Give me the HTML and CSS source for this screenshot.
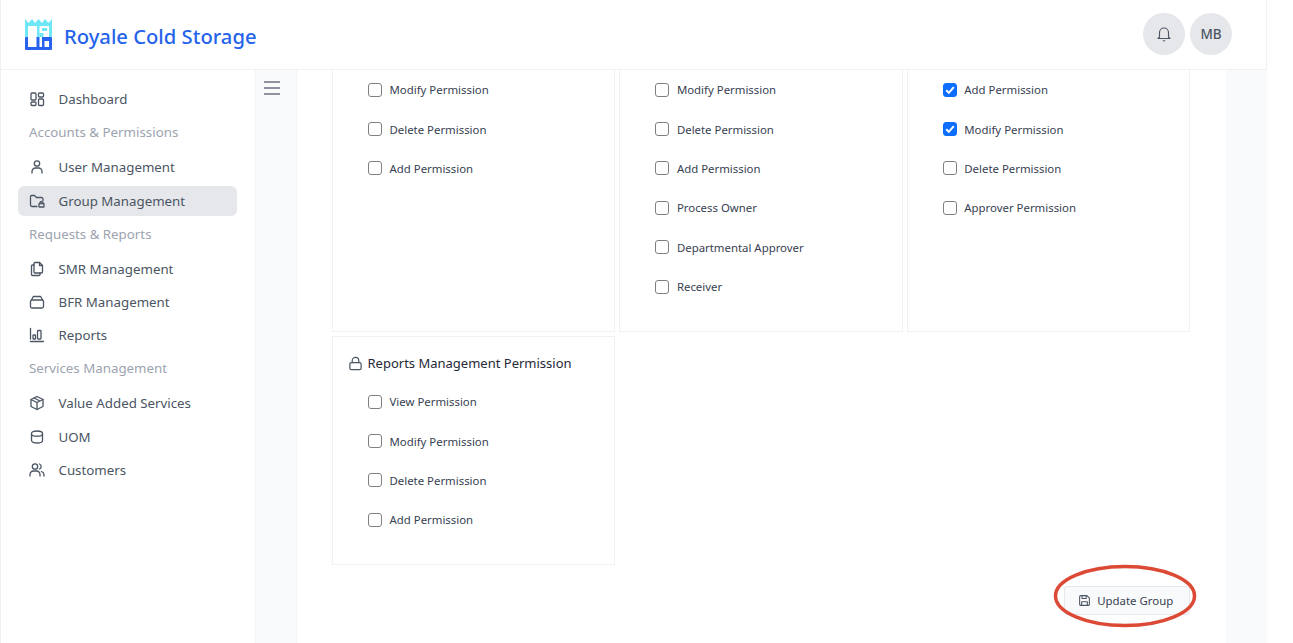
FILE: index.html
```html
<!DOCTYPE html>
<html lang="en">
<head>
<meta charset="utf-8">
<title>Royale Cold Storage</title>
<link rel="stylesheet" href="styles.css">
</head>
<body>
<div class="app">
  <header class="topbar">
    <div class="brand">
      <svg class="logo" viewBox="0 0 27 31" width="27" height="31">
        <path fill="#6ee7f7" d="M0 0L3.500 4 7 0l3 4 3.500-4 3.500 4 3-4 3.500 4L27 0V18H0z"/>
        <path fill="#fff" d="M3 7h9v11H3zM14.500 7h9.500v11H14.500z"/>
        <path fill="#6ee7f7" d="M17 9h5v3h-5zM14.500 14h4v4h-4z"/>
        <rect fill="#2a62f0" y="18" width="27" height="13" rx="1"/>
        <path fill="#fff" d="M3 18h8.500v10H3zM14.500 18h2.500v10h-2.500zM19.500 22H24v6h-4.500z"/>
      </svg>
      <span class="brand-name">Royale Cold Storage</span>
    </div>
    <div class="top-actions">
      <button class="round-btn" type="button" aria-label="Notifications">
        <svg class="icon" viewBox="0 0 24 24" width="18" height="18"><path d="M6 16V10a6 6 0 0 1 12 0v6l2 2H4z"/><path d="M11 21h2"/></svg>
      </button>
      <button class="round-btn round-text" type="button">MB</button>
    </div>
  </header>
  <div class="body">
    <nav class="sidebar">
      <a class="nav-item"><svg class="icon" viewBox="0 0 16 16"><rect x="2" y="2" width="5" height="7" rx="1"/><rect x="9.500" y="2" width="5" height="4" rx="1"/><rect x="2" y="11" width="5" height="3.500" rx="1"/><rect x="9.500" y="8" width="5" height="6.500" rx="1"/></svg>Dashboard</a>
      <div class="nav-head">Accounts &amp; Permissions</div>
      <a class="nav-item"><svg class="icon" viewBox="0 0 16 16"><circle cx="8" cy="4.500" r="2.700"/><path d="M3 14v-1.500A3.500 3.500 0 0 1 6.500 9h3a3.500 3.500 0 0 1 3.500 3.500V14"/></svg>User Management</a>
      <a class="nav-item nav-active"><svg class="icon" viewBox="0 0 16 16"><path d="M8 13.500H3a1.500 1.500 0 0 1-1.500-1.500V3.500a1 1 0 0 1 1-1h3l2 2h5A1.500 1.500 0 0 1 14 6v1.500"/><rect x="10" y="10.500" width="5" height="3.500" rx=".6"/><path d="M11 10.500V10a1.500 1.500 0 0 1 3 0v.5"/></svg>Group Management</a>
      <div class="nav-head">Requests &amp; Reports</div>
      <a class="nav-item"><svg class="icon" viewBox="0 0 16 16"><path d="M6 1.500h4.500l3 3V11a1 1 0 0 1-1 1H6a1 1 0 0 1-1-1V2.500a1 1 0 0 1 1-1z"/><path d="M10.500 1.500v3h3"/><path d="M5 4H3.500a1 1 0 0 0-1 1v8.500a1 1 0 0 0 1 1H10a1 1 0 0 0 1-1V12"/></svg>SMR Management</a>
      <a class="nav-item"><svg class="icon" viewBox="0 0 16 16"><rect x="1.500" y="6" width="13" height="8" rx="1.500"/><path d="M2.500 6L4 3a1 1 0 0 1 1-.5h6a1 1 0 0 1 1 .5l1.500 3"/></svg>BFR Management</a>
      <a class="nav-item"><svg class="icon" viewBox="0 0 16 16"><path d="M1.500 1.500V12M1.500 14.500H14.500"/><rect x="4" y="8" width="2.500" height="4" rx=".6"/><rect x="8.500" y="3.500" width="3.500" height="8.500" rx=".8"/></svg>Reports</a>
      <div class="nav-head">Services Management</div>
      <a class="nav-item"><svg class="icon" viewBox="0 0 16 16"><path d="M8 1.500l6 3v7l-6 3-6-3v-7z"/><path d="M2 4.500l6 3 6-3M8 7.500v7M5 3l6 3"/></svg>Value Added Services</a>
      <a class="nav-item"><svg class="icon" viewBox="0 0 16 16"><path d="M2.500 4.500C2.500 3 5 2 8 2s5.500 1 5.500 2.500v7C13.500 13 11 14 8 14s-5.500-1-5.500-2.500z"/><path d="M2.500 5c0 1.300 2.500 2.200 5.500 2.200s5.500-.9 5.500-2.200"/></svg>UOM</a>
      <a class="nav-item"><svg class="icon" viewBox="0 0 16 16"><circle cx="6" cy="4.500" r="2.700"/><path d="M1 14v-1.500A3.500 3.500 0 0 1 4.500 9h3a3.500 3.500 0 0 1 3.500 3.500V14"/><path d="M10.500 2a2.700 2.700 0 0 1 0 5M12.500 9.500a3.500 3.500 0 0 1 2.500 3V14"/></svg>Customers</a>
    </nav>
    <div class="gutter">
      <svg class="menu-icon" viewBox="0 0 16 14" width="16" height="14"><path d="M0 1h16M0 7h16M0 13h16"/></svg>
    </div>
    <main class="panel">
      <div class="grid">
        <section class="card card-clipped">
          <label class="perm"><span class="box"></span>Modify Permission</label>
          <label class="perm"><span class="box"></span>Delete Permission</label>
          <label class="perm"><span class="box"></span>Add Permission</label>
        </section>
        <section class="card card-clipped">
          <label class="perm"><span class="box"></span>Modify Permission</label>
          <label class="perm"><span class="box"></span>Delete Permission</label>
          <label class="perm"><span class="box"></span>Add Permission</label>
          <label class="perm"><span class="box"></span>Process Owner</label>
          <label class="perm"><span class="box"></span>Departmental Approver</label>
          <label class="perm"><span class="box"></span>Receiver</label>
        </section>
        <section class="card card-clipped">
          <label class="perm"><span class="box box-on"><svg viewBox="0 0 14 14" width="14" height="14"><path d="M3.200 7.300l2.600 2.500 5-5.600"/></svg></span>Add Permission</label>
          <label class="perm"><span class="box box-on"><svg viewBox="0 0 14 14" width="14" height="14"><path d="M3.200 7.300l2.600 2.500 5-5.600"/></svg></span>Modify Permission</label>
          <label class="perm"><span class="box"></span>Delete Permission</label>
          <label class="perm"><span class="box"></span>Approver Permission</label>
        </section>
        <section class="card">
          <h3 class="card-title"><svg class="icon" viewBox="0 0 16 16" width="15" height="15"><rect x="2" y="7" width="12" height="7.500" rx="1.500"/><path d="M4.500 7V5a3.500 3.500 0 0 1 7 0v2"/></svg>Reports Management Permission</h3>
          <label class="perm"><span class="box"></span>View Permission</label>
          <label class="perm"><span class="box"></span>Modify Permission</label>
          <label class="perm"><span class="box"></span>Delete Permission</label>
          <label class="perm"><span class="box"></span>Add Permission</label>
        </section>
      </div>
      <div class="actions">
        <button class="save-btn" type="button">
          <svg class="icon" viewBox="0 0 16 16" width="13" height="13"><path d="M2 3.500A1.500 1.500 0 0 1 3.500 2h7.500L14 5v7.500a1.500 1.500 0 0 1-1.500 1.500h-9A1.500 1.500 0 0 1 2 12.500z"/><path d="M5 2v3.500h5V2M4.500 14V9.500h7V14"/></svg>
          Update Group
        </button>
      </div>
    </main>
    <div class="gutter-right"></div>
  </div>
</div>
<svg class="annotation" viewBox="0 0 146 66" width="146" height="66"><ellipse cx="73" cy="33" rx="69.500" ry="29.500"/></svg>
</body>
</html>
```
FILE: styles.css
```css
* { box-sizing: border-box; }
html, body { margin: 0; height: 100%; overflow: hidden; background: #fff; }
body { font-family: "Noto Sans", "Open Sans", sans-serif; color: #374151; position: relative; }
.app { width: 1267px; height: 643px; border-left: 1px solid #f0f1f3; display: flex; flex-direction: column; }
.topbar { height: 70px; flex: none; display: flex; align-items: center; justify-content: space-between; padding: 0 34px 1px 24px; border-bottom: 1px solid #f0f1f3; border-right: 1px solid #f0f1f3; background: #fff; }
.brand { display: flex; align-items: center; gap: 12px; }
.logo { display: block; }
.brand-name { font-size: 20.200px; font-weight: 500; color: #2563eb; padding-top: 4px; }
.top-actions { display: flex; gap: 5px; }
.round-btn { width: 42px; height: 42px; border-radius: 50%; border: 0; padding: 0; background: #e5e7eb; color: #4b5563; display: flex; align-items: center; justify-content: center; font: 500 13.500px "Noto Sans", sans-serif; }
.icon { fill: none; stroke: #4b5563; stroke-width: 1.300; stroke-linecap: round; stroke-linejoin: round; flex: none; }
.round-btn .icon { stroke-width: 1.500; }
.body { flex: 1; display: flex; min-height: 0; }
.sidebar { width: 254px; flex: none; padding: 14.300px 18px 0 17px; background: #fff; }
.nav-item { height: 30px; margin-bottom: 3.200px; display: flex; align-items: center; gap: 13.500px; padding-left: 11px; font-size: 13.300px; color: #4b5563; border-radius: 6px; }
.nav-item .icon { width: 16px; height: 16px; }
.nav-active { background: #e5e7eb; }
.nav-head { height: 29.400px; margin-bottom: 5.600px; display: flex; align-items: center; padding-left: 11px; font-size: 13.300px; color: #9ca3af; }
.gutter { width: 41px; flex: none; background: #f9fafb; border-left: 1px solid #f3f4f6; padding: 11px 0 0 8px; }
.menu-icon { display: block; fill: none; stroke: #6b7280; stroke-width: 1.600; }
.panel { width: 930px; flex: none; background: #fff; border-left: 1px solid #f3f4f6; padding: 0 36px 0 35px; display: flex; flex-direction: column; }
.grid { display: grid; grid-template-columns: repeat(3, 283.300px); grid-template-rows: 262px 229px; gap: 4px 4.100px; }
.card { border: 1px solid #f0f1f3; padding: 11px 0 0 35px; display: flex; flex-direction: column; align-items: flex-start; }
.card-clipped { border-top: 0; padding-top: 0; }
.card-title { margin: 0 0 4px -20px; height: 30px; display: flex; align-items: center; gap: 4.500px; font-size: 13px; font-weight: 400; color: #1f2937; }
.perm { height: 39.400px; flex: none; display: flex; align-items: center; gap: 7.500px; font-size: 11.400px; color: #374151; }
.box { width: 14px; height: 14px; flex: none; border: 1px solid #808080; border-radius: 3px; background: #fff; display: block; }
.box-on { background: #0d6efd; border-color: #0d6efd; }
.box-on svg { display: block; margin: -1px; fill: none; stroke: #fff; stroke-width: 2; }
.actions { display: flex; justify-content: flex-end; margin-top: 21px; }
.save-btn { height: 29px; width: 126px; padding: 0 3px 0 0; display: flex; align-items: center; justify-content: center; gap: 6.500px; border: 1px solid #e5e7eb; border-radius: 3px; background: #f9fafb; font: 11.400px "Noto Sans", sans-serif; color: #374151; }
.gutter-right { width: 41px; flex: none; background: #f9fafb; }
.annotation { position: absolute; left: 1052px; top: 563px; fill: none; stroke: #dc4a36; stroke-width: 3.500; }
```
